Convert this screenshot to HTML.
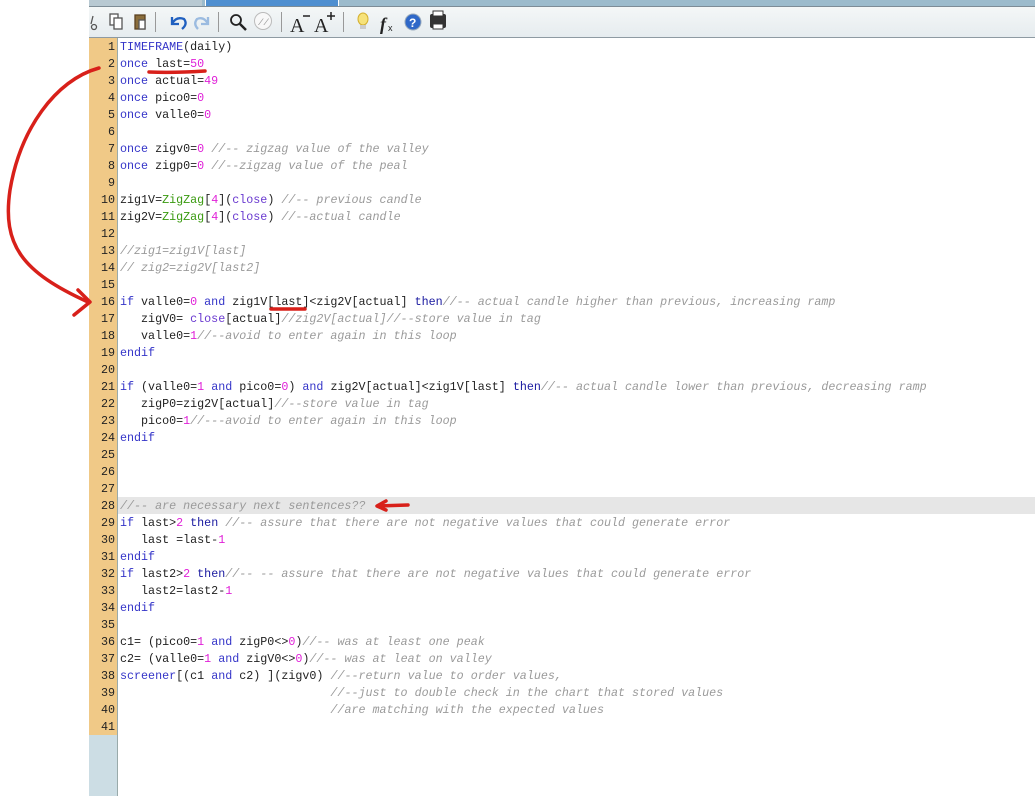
<!DOCTYPE html>
<html><head><meta charset="utf-8"><style>
body{margin:0;width:1035px;height:796px;background:#fff;position:relative;overflow:hidden;font-family:"Liberation Mono",monospace}
.tabs{position:absolute;left:89px;top:0;width:946px;height:6px;background:#9cbbcc;border-bottom:1px solid #7d8c96}
.tab1{position:absolute;left:0;top:0;width:113px;height:6px;background:#b8c9d2}
.tab2{position:absolute;left:116px;top:0;width:132px;height:6px;background:#4f8fd0;border-left:1px solid #fff;border-right:1px solid #fff}
.tb{position:absolute;left:89px;top:7px;width:946px;height:30px;background:linear-gradient(#f4f7f7,#e6ecef);border-bottom:1px solid #8e9aa2}
.gut{position:absolute;left:89px;top:38px;width:28px;height:697px;background:#f0c987}
.gut2{position:absolute;left:89px;top:735px;width:28px;height:61px;background:#ccdde4}
.gl{position:absolute;left:117px;top:38px;width:1px;height:758px;background:#9aa}
.hl{position:absolute;left:118px;top:497px;width:917px;height:17px;background:#e6e6e6}
.ln{position:absolute;left:89px;width:26px;text-align:right;font-size:11.7px;line-height:17px;color:#222}
.cd{position:absolute;left:120px;font-size:11.7px;line-height:17px;color:#222;white-space:pre}
.k{color:#3434c8}.n{color:#e020d8}.c{color:#9a9a9a;font-style:italic}.g{color:#3a9a10}.f{color:#6a3ad0}.t{color:#1a1aa0}
.sep{position:absolute;top:12px;width:1px;height:20px;background:#999}
</style></head><body>
<div class="tabs"><div class="tab1"></div><div class="tab2"></div></div>
<div class="tb"></div>
<svg style="position:absolute;left:0;top:0" width="1035" height="796">
<g stroke="#555" fill="none" stroke-width="1.3">
<path d="M93 16 L91 24"/><circle cx="94" cy="27" r="2.5"/>
<rect x="110" y="14" width="8" height="11" fill="#fff"/><rect x="114" y="18" width="8" height="11" fill="#fff"/>
<rect x="135" y="15" width="10" height="14" fill="#8a6d3b" stroke="#5a4020"/><rect x="139" y="20" width="6" height="9" fill="#fff"/>
</g>
<path d="M172 17 L172 24 L179 24 M172 24 Q176 16 184 19 Q188 24 182 29" stroke="#2060c0" stroke-width="2.3" fill="none"/>
<path d="M208 17 L208 24 L201 24 M208 24 Q204 16 197 19 Q193 24 198 29" stroke="#9bbbe0" stroke-width="2.3" fill="none"/>
<circle cx="236" cy="20" r="5" stroke="#222" stroke-width="1.8" fill="none"/><path d="M240 24 L246 30" stroke="#222" stroke-width="2.5"/>
<circle cx="263" cy="21" r="8.5" stroke="#bbb" fill="#f8f8f8"/><text x="258" y="25" font-size="9" fill="#999" font-style="italic">//</text>
<text x="290" y="32" font-family="Liberation Serif" font-size="20" fill="#222">A</text><path d="M303 16 h7" stroke="#222" stroke-width="1.5"/>
<text x="314" y="32" font-family="Liberation Serif" font-size="20" fill="#222">A</text><path d="M327 16 h8 M331 12 v8" stroke="#222" stroke-width="1.5"/>
<ellipse cx="363" cy="19" rx="5" ry="6" fill="#f6e27a" stroke="#d4b030"/><rect x="360" y="25" width="6" height="4" fill="#ccc"/>
<text x="380" y="30" font-family="Liberation Serif" font-style="italic" font-weight="bold" font-size="18" fill="#222">f</text><text x="388" y="31" font-size="9" font-family="Liberation Sans" fill="#222">x</text>
<circle cx="413" cy="22" r="8" fill="#2f68c8" stroke="#9ab"/><text x="409" y="27" font-size="12" font-weight="bold" fill="#fff" font-family="Liberation Sans">?</text>
<rect x="430" y="14" width="16" height="14" rx="2" fill="#333"/><rect x="433" y="11" width="10" height="5" fill="#fff" stroke="#333"/><rect x="433" y="24" width="10" height="5" fill="#fff" stroke="#333"/>
</svg>
<div class="sep" style="left:155px"></div><div class="sep" style="left:218px"></div><div class="sep" style="left:281px"></div><div class="sep" style="left:343px"></div>
<div class="gut"></div><div class="gut2"></div><div class="gl"></div><div class="hl"></div>
<div class="ln" style="top:39px">1<br>2<br>3<br>4<br>5<br>6<br>7<br>8<br>9<br>10<br>11<br>12<br>13<br>14<br>15<br>16<br>17<br>18<br>19<br>20<br>21<br>22<br>23<br>24<br>25<br>26<br>27<br>28<br>29<br>30<br>31<br>32<br>33<br>34<br>35<br>36<br>37<br>38<br>39<br>40<br>41</div>
<div class="cd" style="top:39px"><span class="k">TIMEFRAME</span>(daily)
<span class="k">once</span> last=<span class="n">50</span>
<span class="k">once</span> actual=<span class="n">49</span>
<span class="k">once</span> pico0=<span class="n">0</span>
<span class="k">once</span> valle0=<span class="n">0</span>

<span class="k">once</span> zigv0=<span class="n">0</span> <span class="c">//-- zigzag value of the valley</span>
<span class="k">once</span> zigp0=<span class="n">0</span> <span class="c">//--zigzag value of the peal</span>

zig1V=<span class="g">ZigZag</span>[<span class="n">4</span>](<span class="f">close</span>) <span class="c">//-- previous candle</span>
zig2V=<span class="g">ZigZag</span>[<span class="n">4</span>](<span class="f">close</span>) <span class="c">//--actual candle</span>

<span class="c">//zig1=zig1V[last]</span>
<span class="c">// zig2=zig2V[last2]</span>

<span class="k">if</span> valle0=<span class="n">0</span> <span class="k">and</span> zig1V[last]&lt;zig2V[actual] <span class="t">then</span><span class="c">//-- actual candle higher than previous, increasing ramp</span>
   zigV0= <span class="f">close</span>[actual]<span class="c">//zig2V[actual]//--store value in tag</span>
   valle0=<span class="n">1</span><span class="c">//--avoid to enter again in this loop</span>
<span class="k">endif</span>

<span class="k">if</span> (valle0=<span class="n">1</span> <span class="k">and</span> pico0=<span class="n">0</span>) <span class="k">and</span> zig2V[actual]&lt;zig1V[last] <span class="t">then</span><span class="c">//-- actual candle lower than previous, decreasing ramp</span>
   zigP0=zig2V[actual]<span class="c">//--store value in tag</span>
   pico0=<span class="n">1</span><span class="c">//---avoid to enter again in this loop</span>
<span class="k">endif</span>



<span class="c">//-- are necessary next sentences??</span>
<span class="k">if</span> last&gt;<span class="n">2</span> <span class="t">then</span> <span class="c">//-- assure that there are not negative values that could generate error</span>
   last =last-<span class="n">1</span>
<span class="k">endif</span>
<span class="k">if</span> last2&gt;<span class="n">2</span> <span class="t">then</span><span class="c">//-- -- assure that there are not negative values that could generate error</span>
   last2=last2-<span class="n">1</span>
<span class="k">endif</span>

c1= (pico0=<span class="n">1</span> <span class="k">and</span> zigP0&lt;&gt;<span class="n">0</span>)<span class="c">//-- was at least one peak</span>
c2= (valle0=<span class="n">1</span> <span class="k">and</span> zigV0&lt;&gt;<span class="n">0</span>)<span class="c">//-- was at leat on valley</span>
<span class="k">screener</span>[(c1 <span class="k">and</span> c2) ](zigv0) <span class="c">//--return value to order values,</span>
                              <span class="c">//--just to double check in the chart that stored values</span>
                              <span class="c">//are matching with the expected values</span>
</div>
<svg style="position:absolute;left:0;top:0" width="1035" height="796">
<g stroke="#d8201a" stroke-width="3.5" fill="none" stroke-linecap="round" stroke-linejoin="round">
<path d="M99 68 C55 80 20 130 10 190 C2 245 22 272 88 302"/>
<path d="M78 290 L90 302 L74 315"/>
<path d="M149 72 C170 73 190 72 205 71"/>
<path d="M271 309 L305 309"/>
<path d="M378 506 L408 505"/><path d="M386 501 L377 506 L386 510"/>
</g>
</svg>
</body></html>
